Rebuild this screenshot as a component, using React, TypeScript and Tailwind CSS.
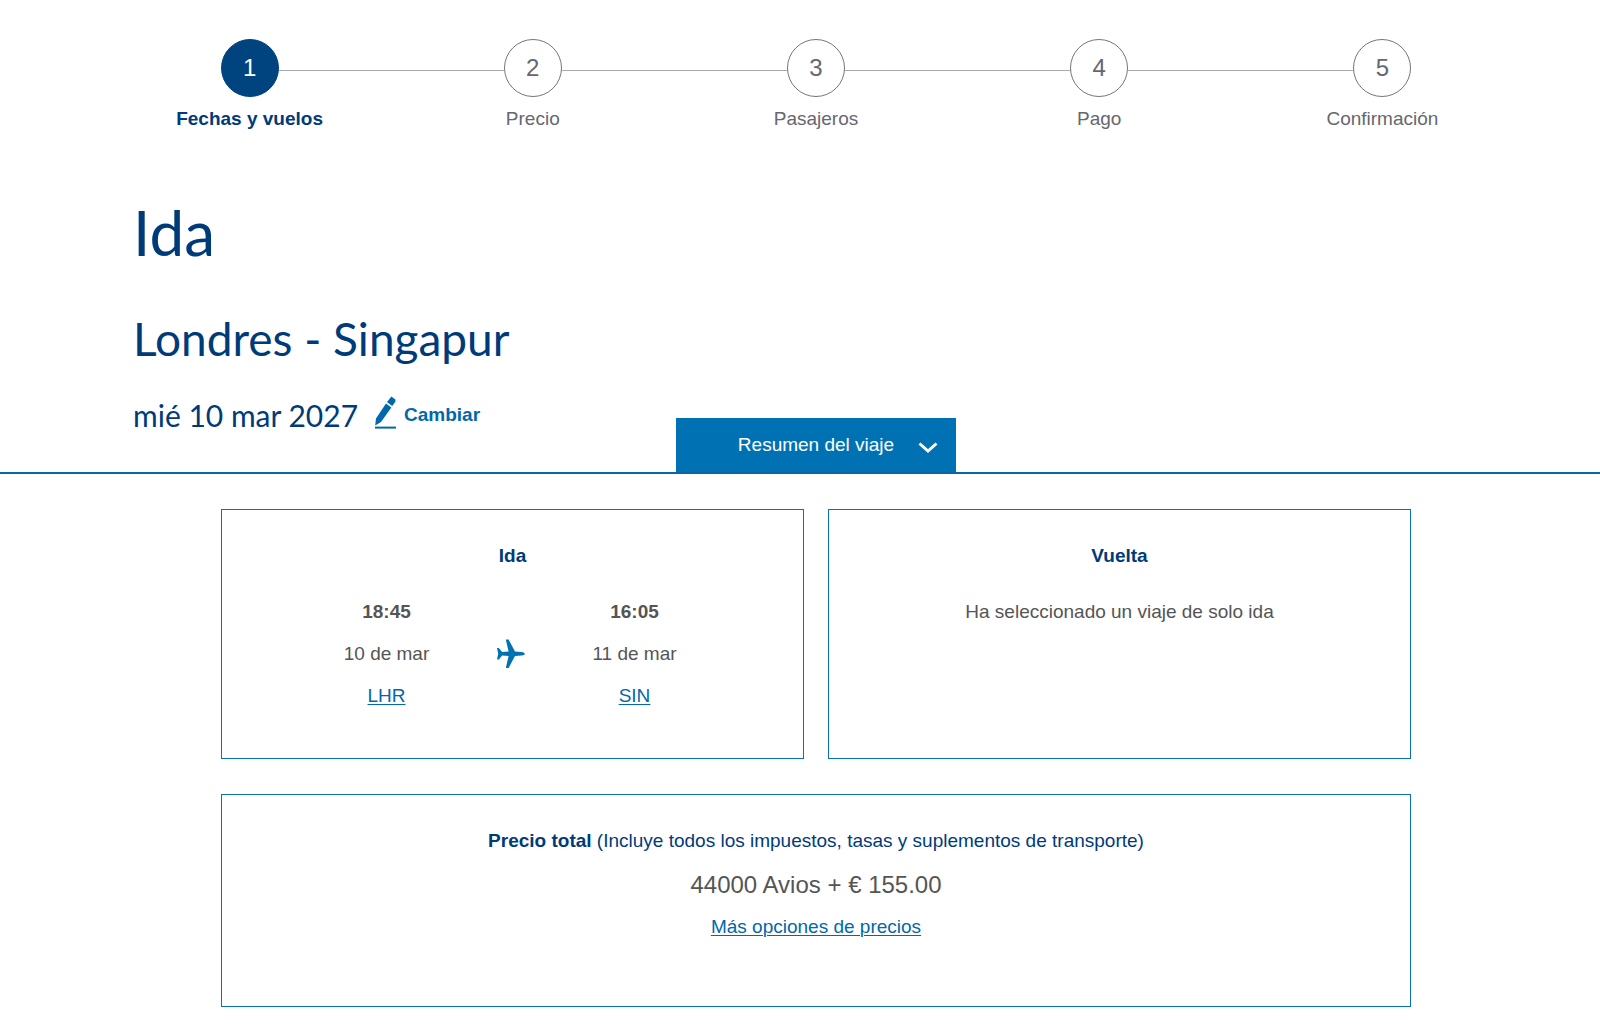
import { useState } from "react";

const steps = ["Fechas y vuelos", "Precio", "Pasajeros", "Pago", "Confirmación"];

const flight = {
  departure: { time: "18:45", date: "10 de mar", airport: "LHR" },
  arrival: { time: "16:05", date: "11 de mar", airport: "SIN" },
};

function PencilIcon() {
  return (
    <svg width="22" height="38" viewBox="0 0 22 38" fill="currentColor" aria-hidden="true">
      <path d="M2 22.4 L12 7.4 L17.4 11.4 L7 26 L1.2 29.4 Z" />
      <path d="M13 6 L17.4 0.4 L21.4 3.6 L21.4 5.8 L18.2 10 Z" />
      <path d="M1 30.6h21v2H1z" />
    </svg>
  );
}

function PlaneIcon() {
  return (
    <svg width="28" height="30" viewBox="0 0 28 30" fill="currentColor" aria-hidden="true">
      <path d="M0 9h1.8l3.4 4 6.4-.4L9 1.4V.6h2.6l6.4 12 6.6.4c2 .2 3.2.9 3.2 1.8s-1.2 1.6-3.2 1.8l-6.6.4L11.6 29H9v-.8L11.6 17l-6.4-.4L1.8 20.6H0l1.2-5.8z" />
    </svg>
  );
}

function Stop({ time, date, airport }: { time: string; date: string; airport: string }) {
  return (
    <div className="flex w-27 flex-col items-center gap-4">
      <p className="font-bold">{time}</p>
      <p>{date}</p>
      <a href="#" className="text-[#0068ab] underline underline-offset-2 decoration-1">
        {airport}
      </a>
    </div>
  );
}

export default function App() {
  const [open, setOpen] = useState(true);

  return (
    <div className="min-h-screen bg-white pb-5 font-['Liberation_Sans',Arial,sans-serif] text-[19px] leading-[26px] text-[#555]">
      <div className="pl-8">
        {/* Booking progress */}
        <ol className="mx-auto grid max-w-[1416px] grid-cols-5 pt-[39px]">
          {steps.map((label, i) => (
            <li key={label} className="flex flex-col items-center gap-[9px]">
              <div className="flex w-full items-center">
                <span className={`mt-1 h-px flex-1 ${i > 0 ? "bg-[#a9aaaf]" : ""}`} />
                <span
                  className={`flex size-[58px] items-center justify-center rounded-full border text-2xl ${
                    i === 0
                      ? "border-[#00447f] bg-[#00447f] text-white"
                      : "border-[#74757c] bg-white text-[#66676f]"
                  }`}
                >
                  {i + 1}
                </span>
                <span className={`mt-1 h-px flex-1 ${i < steps.length - 1 ? "bg-[#a9aaaf]" : ""}`} />
              </div>
              <span className={i === 0 ? "font-bold text-[#003b79]" : "text-[#66676f]"}>{label}</span>
            </li>
          ))}
        </ol>

        {/* Selected route */}
        <header className="mx-auto max-w-[1366px] pt-15 font-[Lato,sans-serif] text-[#003b79]">
          <h1 className="text-[62px] leading-20">Ida</h1>
          <h2 className="pt-[39px] text-[46px] leading-14">Londres - Singapur</h2>
          <div className="flex items-center gap-4 pt-7">
            <p className="text-[30px] leading-10">mié 10 mar 2027</p>
            <button
              type="button"
              className="flex items-center gap-2 font-['Liberation_Sans',Arial,sans-serif] font-bold text-[#0068ab]"
            >
              <PencilIcon />
              Cambiar
            </button>
          </div>
        </header>
      </div>

      {/* Trip summary tab */}
      <div className="-mt-[17px] flex justify-center border-b-2 border-[#0a66a3] pl-8">
        <button
          type="button"
          aria-expanded={open}
          onClick={() => setOpen(!open)}
          className="relative h-[54px] w-[280px] bg-[#0072b4] text-white"
        >
          Resumen del viaje
          <svg
            className="absolute top-6 right-[18px]"
            width="20"
            height="12"
            viewBox="0 0 20 12"
            fill="none"
            stroke="currentColor"
            strokeWidth="3"
            aria-hidden="true"
          >
            <path d="M1.5 1.5 L10 9 L18.5 1.5" />
          </svg>
        </button>
      </div>

      {open && (
        <main className="pt-[35px] pl-8">
          <div className="mx-auto flex max-w-[1190px] flex-col gap-[35px] text-center">
            <div className="grid grid-cols-2 gap-6">
              <section className="h-[250px] border border-[#0b72b0] pt-[33px]">
                <h3 className="font-bold text-[#003b79]">Ida</h3>
                <div className="flex items-center justify-center gap-14 pt-[30px] pr-1">
                  <Stop {...flight.departure} />
                  <span className="text-[#0072b4]">
                    <PlaneIcon />
                  </span>
                  <Stop {...flight.arrival} />
                </div>
              </section>
              <section className="h-[250px] border border-[#0b72b0] pt-[33px]">
                <h3 className="font-bold text-[#003b79]">Vuelta</h3>
                <p className="pt-[30px]">Ha seleccionado un viaje de solo ida</p>
              </section>
            </div>

            <section className="h-[213px] border border-[#0b72b0] pt-[33px]">
              <p className="text-[#003b79]">
                <strong>Precio total</strong> (Incluye todos los impuestos, tasas y suplementos de transporte)
              </p>
              <p className="pt-[17px] text-2xl leading-7">44000 Avios + € 155.00</p>
              <a href="#" className="mt-[15px] inline-block text-[#0068ab] underline underline-offset-2 decoration-1">
                Más opciones de precios
              </a>
            </section>
          </div>
        </main>
      )}
    </div>
  );
}
